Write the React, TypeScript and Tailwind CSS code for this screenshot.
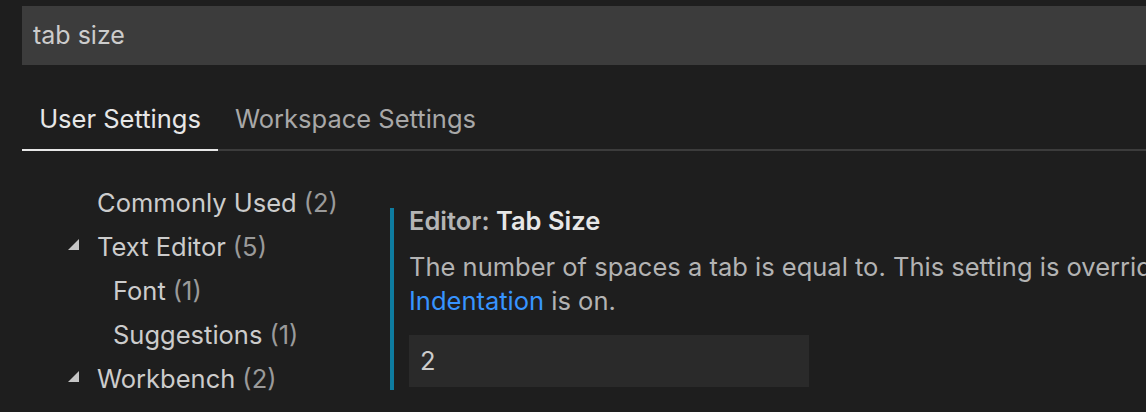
import React from "react";

const Tri = () => (
  <svg width="11" height="11" viewBox="0 0 11 11" className="block">
    <polygon points="11,0 11,11 0,11" fill="#c5c5c5" />
  </svg>
);

export default function App() {
  const font = { fontFamily: "Inter, 'Noto Sans', sans-serif" };
  return (
    <div className="w-[1146px] h-[412px] bg-[#1e1e1e] overflow-hidden text-[25.5px]" style={font}>
      <div className="pl-[22px] pt-[6px]">
        <div className="h-[59px] w-[1200px] bg-[#3c3c3c] flex items-center pl-[11px] text-[#cccccc] text-[25px]">
          tab size
        </div>
        <div className="mt-[27px] flex h-[59px] border-b-2 border-[#3c3c3c] w-[1200px]">
          <div className="w-[196px] -mb-[2px] border-b-2 border-[#e7e7e7] flex items-center justify-center text-[#e7e7e7] whitespace-nowrap -mt-[3px]">
            User Settings
          </div>
          <div className="pl-[17px] flex items-center text-[#a8a8a8] whitespace-nowrap -mt-[3px]">Workspace Settings</div>
        </div>
        <div className="flex mt-[30px]">
          <div className="w-[368px] shrink-0 flex flex-col text-[#cccccc] whitespace-nowrap">
            {[
              { t: "Commonly Used", n: 2, tri: false, ind: 75 },
              { t: "Text Editor", n: 5, tri: true, ind: 75 },
              { t: "Font", n: 1, tri: false, ind: 91 },
              { t: "Suggestions", n: 1, tri: false, ind: 91 },
              { t: "Workbench", n: 2, tri: true, ind: 75 },
            ].map((r) => (
              <div key={r.t} className="h-[44px] flex items-center relative" style={{ paddingLeft: r.ind }}>
                {r.tri && (
                  <span className="absolute left-[46px] top-[14px]">
                    <Tri />
                  </span>
                )}
                <span>{r.t}</span>
                <span className="text-[#9a9a9a] ml-[7px]">({r.n})</span>
              </div>
            ))}
          </div>
          <div className="mt-[27px] h-[182px] border-l-4 border-[#0e7ca0] pl-[15px] flex flex-col">
            <div className="font-semibold leading-[28px] -mt-[1px] whitespace-nowrap">
              <span className="text-[#b5b5b5]">Editor: </span>
              <span className="text-[#e7e7e7]">Tab Size</span>
            </div>
            <div className="text-[#b3b3b3] leading-[34px] mt-[15px] whitespace-nowrap">
              The number of spaces a tab is equal to. This setting is overridden based on the file contents when Detect
              <br />
              <span className="text-[#3794ff]">Indentation</span> is on.
            </div>
            <div className="mt-[17px] w-[400px] h-[52px] bg-[#2a2a2a] flex items-center pl-[11px] text-[#cccccc]">2</div>
          </div>
        </div>
      </div>
    </div>
  );
}
